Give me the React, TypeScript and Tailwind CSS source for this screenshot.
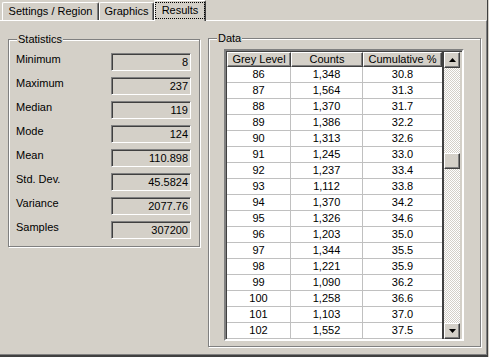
import React from "react";

const stats: [string, string][] = [
  ["Minimum", "8"],
  ["Maximum", "237"],
  ["Median", "119"],
  ["Mode", "124"],
  ["Mean", "110.898"],
  ["Std. Dev.", "45.5824"],
  ["Variance", "2077.76"],
  ["Samples", "307200"],
];

const rows: [string, string, string][] = [
  ["86", "1,348", "30.8"],
  ["87", "1,564", "31.3"],
  ["88", "1,370", "31.7"],
  ["89", "1,386", "32.2"],
  ["90", "1,313", "32.6"],
  ["91", "1,245", "33.0"],
  ["92", "1,237", "33.4"],
  ["93", "1,112", "33.8"],
  ["94", "1,370", "34.2"],
  ["95", "1,326", "34.6"],
  ["96", "1,203", "35.0"],
  ["97", "1,344", "35.5"],
  ["98", "1,221", "35.9"],
  ["99", "1,090", "36.2"],
  ["100", "1,258", "36.6"],
  ["101", "1,103", "37.0"],
  ["102", "1,552", "37.5"],
];

const raised =
  "border border-t-white border-l-white border-r-[#404040] border-b-[#404040] shadow-[inset_-1px_-1px_0_#808080]";

function ScrollButton({ down }: { down?: boolean }) {
  return (
    <div className={`flex h-[16px] w-[16px] items-center justify-center bg-[#d4d0c8] ${raised}`}>
      <svg width="7" height="4" viewBox="0 0 7 4">
        {down ? <polygon points="0,0 7,0 3.5,4" fill="#000" /> : <polygon points="3.5,0 7,4 0,4" fill="#000" />}
      </svg>
    </div>
  );
}

export default function App() {
  return (
    <div className="h-[357px] w-[489px] bg-[#d4d0c8] font-['Liberation_Sans',Arial,sans-serif] text-[11px] leading-[13px] text-black">
      <div className="flex h-[357px] w-[488px] flex-col border-r border-b-2 border-r-[#404040] border-b-[#404040]">
        {/* Tabs */}
        <div className="flex h-[20px] items-end pl-[2px]">
          <div className="flex h-[18px] w-[97px] items-center justify-center rounded-t-[2px] border-t border-l border-r border-t-white border-l-white border-r-[#404040] shadow-[inset_-1px_0_0_#808080]">
            Settings / Region
          </div>
          <div className="flex h-[18px] w-[55px] items-center justify-center rounded-t-[2px] border-t border-l border-r border-t-white border-l-white border-r-[#404040] shadow-[inset_-1px_0_0_#808080]">
            Graphics
          </div>
          <div className="relative z-10 -mb-px flex h-[21px] w-[52px] items-start justify-center rounded-t-[2px] border-t border-l border-r border-t-white border-l-white border-r-[#404040] bg-[#d4d0c8] pt-[1px] shadow-[inset_-1px_0_0_#808080]">
            <span className="border border-dotted border-black px-[6px] py-[1px]">Results</span>
          </div>
        </div>

        {/* Page */}
        <div className="flex flex-1 items-start gap-[8px] border-t border-r border-b border-t-white border-r-[#808080] border-b-[#808080] pt-[17px] pl-[8px]">
          {/* Statistics */}
          <div className="relative mt-[1px] flex h-[208px] w-[192px] flex-col gap-[6px] border border-[#808080] pt-[13px] pr-[8px] pl-[7px] shadow-[inset_1px_1px_0_#fff,1px_1px_0_#fff]">
            <span className="absolute -top-[7px] left-[8px] bg-[#d4d0c8] px-[1px]">Statistics</span>
            {stats.map(([label, value]) => (
              <div key={label} className="flex h-[18px] items-start justify-between">
                <span>{label}</span>
                <div className="h-[18px] w-[80px] border border-t-[#808080] border-l-[#808080] border-r-white border-b-white pr-[2px] text-right leading-[16px] shadow-[inset_1px_1px_0_#404040]">
                  {value}
                </div>
              </div>
            ))}
          </div>

          {/* Data */}
          <div className="relative h-[309px] w-[273px] border border-[#808080] pt-[10px] pl-[15px] shadow-[inset_1px_1px_0_#fff,1px_1px_0_#fff]">
            <span className="absolute -top-[7px] left-[8px] bg-[#d4d0c8] px-[1px]">Data</span>
            <div className="flex w-[240px] border-2 border-t-[#808080] border-l-[#808080] border-r-white border-b-white shadow-[inset_1px_1px_0_#404040]">
              <div className="ml-[1px] mt-[1px] flex w-[217px] flex-col border-r-2 border-r-[#404040] bg-white">
                <div className="flex h-[15px] bg-[#d4d0c8]">
                  <div className={`flex w-[64px] items-center justify-center ${raised}`}>Grey Level</div>
                  <div className={`flex w-[72px] items-center justify-center ${raised}`}>Counts</div>
                  <div className={`flex w-[79px] items-center justify-center ${raised}`}>Cumulative %</div>
                </div>
                {rows.map(([g, c, p]) => (
                  <div key={g} className="flex h-[16px] border-b border-[#c0c0c0] leading-[15px]">
                    <div className="w-[64px] border-r border-[#c0c0c0] text-center">{g}</div>
                    <div className="w-[72px] border-r border-[#c0c0c0] text-center">{c}</div>
                    <div className="w-[79px] text-center">{p}</div>
                  </div>
                ))}
              </div>
              <div className="mt-[1px] flex w-[16px] flex-col bg-[repeating-conic-gradient(#ffffff_0%_25%,#d4d0c8_0%_50%)] bg-[length:2px_2px]">
                <ScrollButton />
                <div className="h-[85px]" />
                <div className={`h-[16px] w-[16px] bg-[#d4d0c8] ${raised}`} />
                <div className="flex-1" />
                <ScrollButton down />
              </div>
            </div>
          </div>
        </div>
      </div>
    </div>
  );
}
